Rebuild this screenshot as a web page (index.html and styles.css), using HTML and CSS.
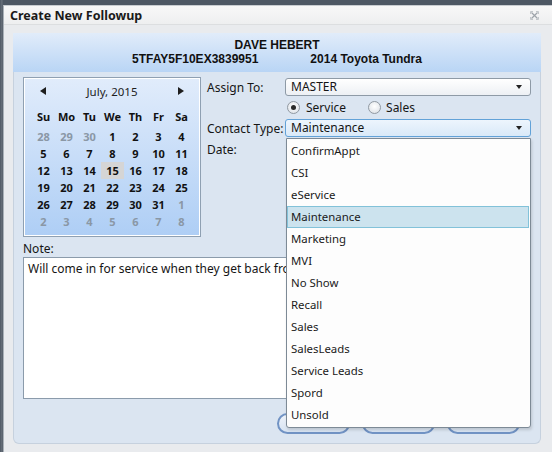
FILE: index.html
```html
<!DOCTYPE html>
<html>
<head>
<meta charset="utf-8">
<title>Create New Followup</title>
<link rel="stylesheet" href="styles.css">
</head>
<body>
<div class="dialog">
  <div class="titlebar">
    <span class="title">Create New Followup</span>
    <svg class="close" width="9" height="9" viewBox="0 0 9 9"><path d="M1.5 1.5L7.5 7.5M7.5 1.5L1.5 7.5" stroke="#9ea4aa" stroke-width="1.2"/><path d="M0.5 3V0.5H3M6 0.5H8.5V3M8.5 6V8.5H6M3 8.5H0.5V6" stroke="#c2c6ca" fill="none"/></svg>
  </div>
  <div class="content">
    <div class="header">
      <div>DAVE HEBERT</div>
      <div><span>5TFAY5F10EX3839951</span><span class="car">2014 Toyota Tundra</span></div>
    </div>
    <div class="panel">
      <div class="top">
        <div class="calendar">
          <div class="cal-head">
            <span class="arrow left"></span>
            <span class="month">July, 2015</span>
            <span class="arrow right"></span>
          </div>
          <div class="dow">
            <span>Su</span><span>Mo</span><span>Tu</span><span>We</span><span>Th</span><span>Fr</span><span>Sa</span>
          </div>
          <div class="dates">
            <span class="other">28</span><span class="other">29</span><span class="other">30</span><span>1</span><span>2</span><span>3</span><span>4</span>
            <span>5</span><span>6</span><span>7</span><span>8</span><span>9</span><span>10</span><span>11</span>
            <span>12</span><span>13</span><span>14</span><span class="today">15</span><span>16</span><span>17</span><span>18</span>
            <span>19</span><span>20</span><span>21</span><span>22</span><span>23</span><span>24</span><span>25</span>
            <span>26</span><span>27</span><span>28</span><span>29</span><span>30</span><span>31</span><span class="other">1</span>
            <span class="other">2</span><span class="other">3</span><span class="other">4</span><span class="other">5</span><span class="other">6</span><span class="other">7</span><span class="other">8</span>
          </div>
        </div>
        <div class="form">
          <div class="row first">
            <span class="label">Assign To:</span>
            <div class="select"><span>MASTER</span><span class="caret"></span></div>
          </div>
          <div class="radios">
            <span class="radio on"></span><span class="rlabel">Service</span>
            <span class="radio second"></span><span class="rlabel short">Sales</span>
          </div>
          <div class="row third">
            <span class="label">Contact Type:</span>
            <div class="combo">
              <div class="select focus"><span>Maintenance</span><span class="caret"></span></div>
              <div class="menu">
                <div class="item">ConfirmAppt</div>
                <div class="item">CSI</div>
                <div class="item">eService</div>
                <div class="item sel">Maintenance</div>
                <div class="item">Marketing</div>
                <div class="item">MVI</div>
                <div class="item">No Show</div>
                <div class="item">Recall</div>
                <div class="item">Sales</div>
                <div class="item">SalesLeads</div>
                <div class="item">Service Leads</div>
                <div class="item">Spord</div>
                <div class="item">Unsold</div>
              </div>
            </div>
          </div>
          <div class="row date">
            <span class="label">Date:</span>
          </div>
        </div>
      </div>
      <div class="note-label">Note:</div>
      <div class="note">Will come in for service when they get back from vacation.</div>
      <div class="buttons">
        <span class="btn"></span><span class="btn"></span><span class="btn"></span>
      </div>
    </div>
  </div>
</div>
</body>
</html>
```
FILE: styles.css
```css
html, body {
  margin: 0;
  padding: 0;
}
body {
  width: 552px;
  height: 452px;
  overflow: hidden;
  background: linear-gradient(90deg, #4e5864 0, #6a727c 2px, #4e5864 3px);
  font-family: "Noto Sans", "DejaVu Sans", sans-serif;
  font-size: 12px;
  color: #151515;
}
.dialog {
  margin: 5px 0 0 3px;
  width: 549px;
  height: 447px;
  box-sizing: border-box;
  background: #e9ebee;
  border-top: 1px solid #c9cdd1;
  border-left: 1px solid #aab1b8;
}
.titlebar {
  height: 18px;
  display: flex;
  align-items: center;
  padding: 0 13px 0 6px;
  background: linear-gradient(#f8f8f8, #eeeff0);
  border-bottom: 1px solid #dcdee0;
}
.title {
  font-weight: bold;
  font-size: 12.5px;
  color: #1a1a1a;
}
.close {
  margin-left: auto;
  display: block;
}
.content {
  padding: 8px 0 0 9px;
}
.header {
  width: 528px;
  height: 39px;
  box-sizing: border-box;
  padding-top: 5px;
  text-align: center;
  font: bold 12px/14px "Liberation Sans", Arial, sans-serif;
  color: #111;
  background: linear-gradient(#e1ecfa, #b9d5f5);
}
.car {
  margin-left: 52px;
}
.panel {
  width: 528px;
  box-sizing: border-box;
  background: #dbe5f1;
  border: 1px solid #c6d1de;
  border-top: none;
  border-radius: 0 0 6px 6px;
  padding: 5px 9px 9px 9px;
}
.top {
  display: flex;
  gap: 6px;
}
.calendar {
  width: 178px;
  height: 160px;
  flex: none;
  box-sizing: border-box;
  border: 1px solid #8fa0b2;
  box-shadow: inset 0 0 0 1px #ffffff;
  background: linear-gradient(#e1ecfb, #aecef5);
  padding: 4px 7px 0 8px;
  font-size: 11px;
}
.cal-head {
  height: 18px;
  display: flex;
  align-items: center;
  justify-content: space-between;
  padding: 0 9px 0 8px;
}
.month {
  color: #1e1e1e;
  font-size: 11.5px;
}
.arrow {
  width: 0;
  height: 0;
  border-top: 4.5px solid transparent;
  border-bottom: 4.5px solid transparent;
}
.arrow.left {
  border-right: 6px solid #1e1e1e;
}
.arrow.right {
  border-left: 6px solid #1e1e1e;
}
.dow, .dates {
  display: grid;
  grid-template-columns: repeat(7, 23px);
  grid-auto-rows: 17px;
  text-align: center;
  line-height: 17px;
  font-weight: bold;
}
.dow {
  margin-top: 8px;
  color: #111;
}
.dates {
  margin-top: 3px;
  color: #111;
}
.dates .other {
  color: #8a97a5;
}
.dates .today {
  background: #d5d5d5;
}
.form {
  flex: 1;
}
.row {
  display: flex;
  align-items: center;
}
.row.first {
  margin-top: 1px;
}
.row.third {
  margin-top: 1px;
}
.row.date {
  margin-top: 5px;
  height: 14px;
}
.label {
  width: 78px;
  flex: none;
  color: #151515;
}
.select {
  flex: 1;
  height: 18px;
  box-sizing: border-box;
  border: 1px solid #8e9aa6;
  border-radius: 3px;
  background: linear-gradient(#ffffff, #edf0f4);
  display: flex;
  align-items: center;
  padding: 0 8px 0 5px;
  line-height: 16px;
}
.select.focus {
  border-color: #62a2d8;
  background: linear-gradient(#edf5fd, #d9e9f8);
}
.caret {
  margin-left: auto;
  width: 0;
  height: 0;
  border-left: 3.5px solid transparent;
  border-right: 3.5px solid transparent;
  border-top: 4px solid #222;
}
.combo {
  flex: 1;
  position: relative;
  display: flex;
}
.radios {
  height: 22px;
  display: flex;
  align-items: center;
  padding-left: 80px;
}
.radio {
  width: 13px;
  height: 13px;
  flex: none;
  box-sizing: border-box;
  border-radius: 50%;
  border: 1px solid #9199a2;
  background: radial-gradient(circle at 50% 40%, #ffffff, #d9dee4);
  display: flex;
  align-items: center;
  justify-content: center;
}
.radio.on::after {
  content: "";
  width: 5px;
  height: 5px;
  border-radius: 50%;
  background: #2a2a2a;
}
.radio.second {
  margin-left: 22px;
}
.rlabel {
  margin-left: 6px;
}
.rlabel.short {
  margin-left: 5px;
}
.menu {
  position: absolute;
  top: 19px;
  left: 1px;
  right: 0;
  z-index: 5;
  background: #fdfdfd;
  border: 1px solid #7d8a96;
  border-radius: 0 0 3px 3px;
  padding: 1px 0;
  box-shadow: 1px 2px 3px rgba(0, 0, 0, 0.15);
}
.item {
  height: 22px;
  line-height: 22px;
  padding-left: 4px;
  font-size: 11.4px;
  color: #1a1a1a;
}
.item.sel {
  margin-right: 1px;
  background: #cce3ee;
  box-shadow: inset 0 0 0 1px #82c2d9;
}
.note-label {
  margin-top: 5px;
  line-height: 14px;
  height: 14px;
}
.note {
  margin-top: 1px;
  height: 142px;
  box-sizing: border-box;
  border: 1px solid #8b9bab;
  background: #ffffff;
  padding: 4px;
  line-height: 14px;
  color: #151515;
}
.buttons {
  display: flex;
  justify-content: flex-end;
  gap: 12px;
  margin-top: 14px;
  padding-right: 11px;
}
.btn {
  width: 73px;
  height: 21px;
  box-sizing: border-box;
  border: 2px solid #7193c4;
  border-radius: 11px;
  background: linear-gradient(#eef3fa, #d7e3f2);
}
```
